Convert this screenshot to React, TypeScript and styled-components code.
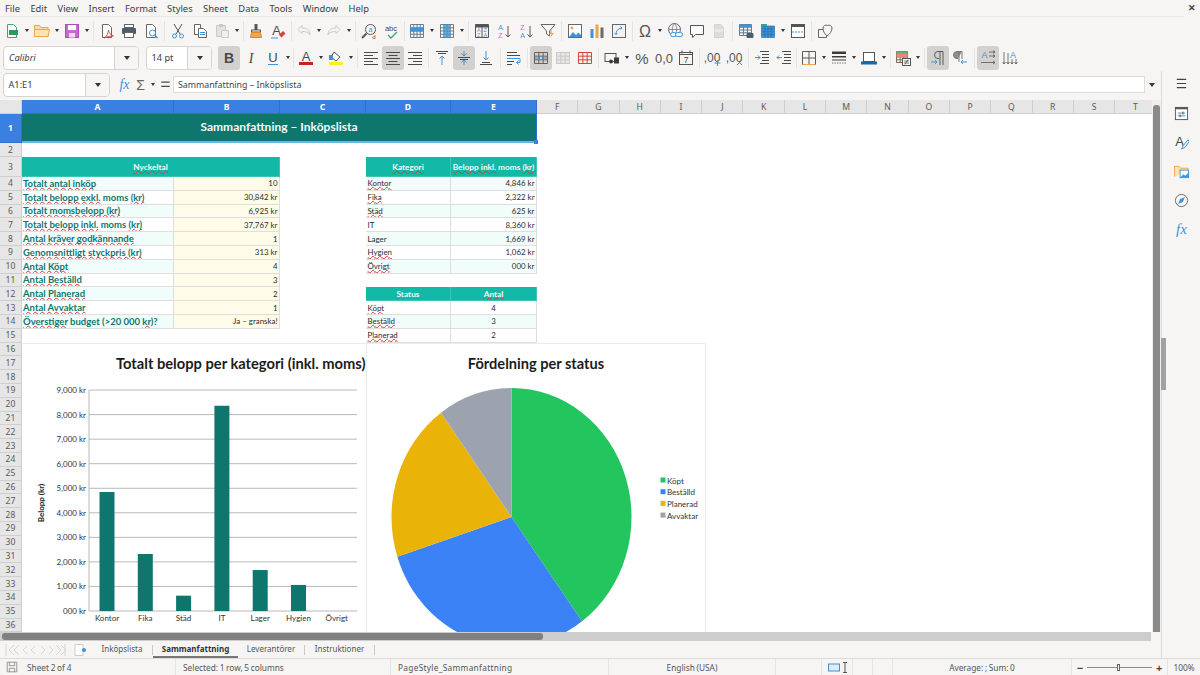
import type { ReactNode } from "react";
import styled, { createGlobalStyle } from "styled-components";

const UI_FONT = `"Noto Sans", "Open Sans", sans-serif`;
const CELL_FONT = `Lato, "Liberation Sans", sans-serif`;

const GlobalStyle = createGlobalStyle`
  html, body {
    margin: 0;
    height: 100%;
    overflow: hidden;
    background: #f6f5f4;
  }
`;

const Page = styled.div`
  width: 1200px;
  height: 675px;
  display: flex;
  flex-direction: column;
  background: #f6f5f4;
  color: #3d3d3d;
  font-family: ${UI_FONT};
  font-size: 9px;
  overflow: hidden;
`;

/* ---------- menu ---------- */

const MenuBar = styled.div`
  height: 16px;
  margin-right: 16px;
  padding-left: 5px;
  display: flex;
  align-items: center;
  gap: 10.4px;
  font-size: 9.4px;
  border-bottom: 1px solid #e9e8e6;
  position: relative;
`;

const CloseMark = styled.span`
  position: absolute;
  right: -12px;
  top: 1px;
  font-size: 9px;
  font-weight: 700;
`;

/* ---------- toolbars ---------- */

const ToolRow = styled.div<{ $first?: boolean }>`
  height: 27px;
  padding-left: ${({ $first }) => ($first ? 1 : 3)}px;
  display: flex;
  align-items: center;
`;

const ToolButton = styled.div<{ $active?: boolean }>`
  width: 22px;
  height: 24px;
  flex: none;
  display: flex;
  align-items: center;
  justify-content: center;
  border-radius: 3px;
  background: ${({ $active }) => ($active ? "#d3d1ce" : "transparent")};

  svg {
    width: 16px;
    height: 16px;
    display: block;
    overflow: visible;
  }
`;

const DropArrow = styled.div`
  width: 8px;
  flex: none;
  display: flex;
  justify-content: center;

  &::after {
    content: "";
    border-left: 2.5px solid transparent;
    border-right: 2.5px solid transparent;
    border-top: 3px solid #333;
  }
`;

const Divider = styled.div<{ $w?: number }>`
  width: ${({ $w }) => $w ?? 5}px;
  flex: none;
  height: 20px;
  display: flex;
  justify-content: center;

  &::after {
    content: "";
    width: 1px;
    background: #e4e3e0;
  }
`;

const Combo = styled.div<{ $w: number; $gap: number }>`
  width: ${({ $w }) => $w}px;
  height: 24px;
  margin-right: ${({ $gap }) => $gap}px;
  flex: none;
  box-sizing: border-box;
  display: flex;
  background: #fff;
  border: 1px solid #d6d4d1;
  border-radius: 4px;
  overflow: hidden;
`;

const ComboText = styled.div<{ $italic?: boolean }>`
  flex: 1;
  padding-left: ${({ $italic }) => ($italic ? 5 : 4.5)}px;
  display: flex;
  align-items: center;
  font-size: 9.2px;
  font-style: ${({ $italic }) => ($italic ? "italic" : "normal")};
`;

const ComboButton = styled.div`
  width: 23px;
  flex: none;
  display: flex;
  align-items: center;
  justify-content: center;
  background: #f6f5f4;
  border-left: 1px solid #d6d4d1;

  &::after {
    content: "";
    border-left: 3.5px solid transparent;
    border-right: 3.5px solid transparent;
    border-top: 4px solid #333;
  }
`;

/* ---------- workspace ---------- */

const Workspace = styled.div`
  flex: 1;
  min-height: 0;
  display: flex;
`;

const MainColumn = styled.div`
  width: 1161px;
  display: flex;
  flex-direction: column;
`;

const Sidebar = styled.div`
  position: relative;
  flex: 1;
  display: flex;
  flex-direction: column;
  align-items: center;
  border-left: 1px solid #dcdbd8;

  svg {
    width: 15px;
    height: 15px;
    margin: 7px 0;
    display: block;
  }

  svg:first-of-type {
    margin: 5px 0 8px;
  }
`;

const SideHandle = styled.div`
  position: absolute;
  left: -1px;
  top: 267px;
  width: 5px;
  height: 52px;
  background: #a2a2a2;
`;

const FormulaBar = styled.div`
  height: 29px;
  padding: 1px 0 3px 3px;
  box-sizing: border-box;
  display: flex;
  align-items: center;
`;

const FormulaIcons = styled.div`
  width: 63px;
  flex: none;
  display: flex;
  align-items: center;
  padding-left: 6.5px;
  gap: 1px;
  box-sizing: border-box;

  svg {
    width: 15px;
    height: 15px;
    flex: none;
    display: block;
  }
`;

const FormulaInput = styled.div`
  width: 972px;
  height: 17px;
  flex: none;
  box-sizing: border-box;
  padding-left: 4px;
  display: flex;
  align-items: center;
  background: #fff;
  border: 1px solid #dddcd9;
  font-size: 8.8px;
  color: #444;
`;

const FormulaArrow = styled(DropArrow)`
  width: 14px;

  &::after {
    border-left-width: 3.5px;
    border-right-width: 3.5px;
    border-top-width: 4px;
  }
`;

const SheetRow = styled.div`
  flex: 1;
  min-height: 0;
  display: flex;
`;

const Sheet = styled.div`
  position: relative;
  flex: 1;
  min-width: 0;
  overflow: hidden;
  display: grid;
  align-content: start;
  grid-template-columns: 22px 152px 106px 86px 85px 86px repeat(15, 41.3px);
  grid-template-rows: 14px 29px 14px 20px repeat(32, 13.8px);
  background: #fff;
  font-family: ${CELL_FONT};
`;

const HeaderCell = styled.div<{ $selected?: boolean; $col?: number }>`
  grid-column: ${({ $col }) => $col ?? "auto"};
  box-sizing: border-box;
  display: flex;
  align-items: center;
  justify-content: center;
  font-family: ${UI_FONT};
  font-size: 8.6px;
  font-weight: ${({ $selected }) => ($selected ? 700 : 400)};
  color: ${({ $selected }) => ($selected ? "#fff" : "#5a5a5a")};
  background: ${({ $selected }) => ($selected ? "#3a7fe2" : "#e6e6e6")};
  border-right: 1px solid ${({ $selected }) => ($selected ? "#2f6fcc" : "#cfcfcf")};
  border-bottom: 1px solid ${({ $selected }) => ($selected ? "#2f6fcc" : "#cfcfcf")};
`;

const RowHeader = styled(HeaderCell)`
  grid-column: 1;
`;

const Cell = styled.div<{
  $col: number;
  $span?: number;
  $bg?: string;
  $align?: string;
}>`
  grid-column: ${({ $col, $span }) => `${$col} / span ${$span ?? 1}`};
  box-sizing: border-box;
  min-width: 0;
  padding: 0 1.5px;
  display: flex;
  align-items: center;
  justify-content: ${({ $align }) => $align ?? "flex-start"};
  white-space: pre;
  overflow: hidden;
  font-size: 7.9px;
  color: #2b2b2b;
  background: ${({ $bg }) => $bg ?? "#fff"};
  border-right: 1px solid #dedede;
  border-bottom: 1px solid #dedede;
`;

const TitleCell = styled(Cell)`
  position: relative;
  overflow: visible;
  padding-bottom: 3px;
  justify-content: center;
  font-size: 12px;
  font-weight: 700;
  color: #f2fbf9;
  background: #0f766e;
  border: none;
  border-right: 1px solid #2f6fcc;
  border-bottom: 2px solid #72aeea;
`;

const FillHandle = styled.span`
  position: absolute;
  right: -2px;
  bottom: -3px;
  width: 4px;
  height: 4px;
  background: #3a7fe2;
`;

const TableHead = styled(Cell)`
  justify-content: center;
  font-size: 8.3px;
  font-weight: 700;
  color: #f0fbf9;
  background: #14b8a6;
  border-color: #3cc4b5;
`;

const KeyLabel = styled(Cell)`
  padding-left: 1px;
  font-size: 9.5px;
  font-weight: 700;
  color: #0f766e;
`;

const Squiggle = styled.span`
  text-decoration: underline wavy #e0353b 1px;
  text-decoration-skip-ink: none;
  text-underline-offset: 0;
`;

const ChartLayer = styled.div`
  position: absolute;
  left: 22px;
  top: 243px;
  display: flex;
`;

const ChartFrame = styled.div<{ $last?: boolean }>`
  width: ${({ $last }) => ($last ? 340 : 344)}px;
  height: 300px;
  box-sizing: border-box;
  background: #fff;
  border: 1px solid #ececec;
  border-left-color: ${({ $last }) => ($last ? "#ececec" : "transparent")};
  border-right-width: ${({ $last }) => ($last ? 1 : 0)}px;

  svg {
    display: block;
    font-family: ${CELL_FONT};
  }
`;

const VScroll = styled.div`
  width: 9px;
  flex: none;
  padding: 5px 1px 0;
  box-sizing: border-box;
  background: #efefee;
  display: flex;

  &::after {
    content: "";
    flex: 1;
    background: #8a8a8a;
    border-radius: 3px 3px 0 0;
  }
`;

const HScroll = styled.div`
  height: 9px;
  flex: none;
  margin-right: 10px;
  padding: 1px 0 1px 2px;
  box-sizing: border-box;
  background: #cdcdcd;
  display: flex;

  &::after {
    content: "";
    width: 541px;
    background: #808080;
    border-radius: 3px;
  }
`;

const TabBar = styled.div`
  height: 17px;
  flex: none;
  display: flex;
  align-items: center;
  font-size: 8px;
  color: #555;
`;

const TabNav = styled.div`
  width: 92px;
  flex: none;
  padding-left: 5px;
  box-sizing: border-box;
  display: flex;
  align-items: center;
`;

const Tab = styled.div<{ $active?: boolean; $w: number }>`
  width: ${({ $w }) => $w}px;
  height: 17px;
  flex: none;
  box-sizing: border-box;
  display: flex;
  align-items: center;
  justify-content: center;
  font-weight: ${({ $active }) => ($active ? 700 : 400)};
  color: ${({ $active }) => ($active ? "#333" : "#555")};
  border-bottom: 2px solid ${({ $active }) => ($active ? "#777" : "transparent")};
`;

const TabSeparator = styled.div`
  width: 1px;
  height: 10px;
  flex: none;
  background: #c9c9c9;
`;

/* ---------- status bar ---------- */

const StatusBar = styled.div`
  height: 17px;
  flex: none;
  display: flex;
  font-size: 8.3px;
  word-spacing: -0.5px;
  color: #555;
  border-top: 1px solid #dcdbd8;
  box-sizing: border-box;
`;

const StatusPart = styled.div<{ $w: number; $center?: boolean; $pad?: number }>`
  width: ${({ $w }) => $w}px;
  flex: none;
  box-sizing: border-box;
  padding-left: ${({ $pad }) => $pad ?? 0}px;
  display: flex;
  align-items: center;
  justify-content: ${({ $center }) => ($center ? "center" : "flex-start")};
  gap: 4px;

  & + & {
    border-left: 1px solid #e6e5e2;
  }
`;

const PageStyleName = styled.span`
  letter-spacing: 0.3px;
`;

const SheetCount = styled.span`
  margin-left: 3px;
`;

const ZoomTrack = styled.div`
  position: relative;
  width: 65px;
  height: 1px;
  background: #8a8a8a;
`;

const ZoomKnob = styled.span`
  position: absolute;
  left: 30px;
  top: -3px;
  width: 3px;
  height: 7px;
  box-sizing: border-box;
  background: #f6f5f4;
  border: 1px solid #666;
`;

const ZoomSign = styled.span`
  font-size: 11px;
  font-weight: 700;
  line-height: 1;
  color: #444;
`;

/* ---------- icons ---------- */

const INK = "#4a4a4a";
const BLUE = "#3d94d8";
const DIM = "#c9c9c9";
const RED = "#d9413b";
const ORANGE = "#eea64a";

// path for a small table outline
const grid = (x: number, y: number, w: number, h: number, cols: number, rows: number) => {
  let d = `M${x} ${y}h${w}v${h}h${-w}z`;
  for (let i = 1; i < cols; i++) d += `M${x + (w * i) / cols} ${y}v${h}`;
  for (let i = 1; i < rows; i++) d += `M${x} ${y + (h * i) / rows}h${w}`;
  return d;
};

const Svg = ({ children }: { children: ReactNode }) => (
  <svg viewBox="0 0 16 16" fill="none" stroke={INK} strokeWidth="1">
    {children}
  </svg>
);

const Label = ({ x, y, size, fill, children, weight, italic, family }: {
  x: number;
  y: number;
  size: number;
  fill?: string;
  children: string;
  weight?: number;
  italic?: boolean;
  family?: string;
}) => (
  <text
    x={x}
    y={y}
    fontSize={size}
    fill={fill ?? INK}
    stroke="none"
    fontWeight={weight ?? 400}
    fontStyle={italic ? "italic" : "normal"}
    fontFamily={family ?? "'Liberation Sans', sans-serif"}
    textAnchor="middle"
  >
    {children}
  </text>
);

const doc = "M3.5 1.5h6l3 3v10h-9z";
const lines = (rows: [number, number, number][], color = INK) => (
  <path stroke={color} d={rows.map(([x, y, w]) => `M${x} ${y + 0.5}h${w}`).join("")} />
);

const icons: Record<string, ReactNode> = {
  new: (
    <>
      <path d={doc} fill="#fff" stroke="#45a56c" />
      <rect x="5" y="7" width="9" height="5" fill="#2f9a5d" stroke="none" />
    </>
  ),
  open: (
    <>
      <path d="M.5 13.5v-11h5l1.5 2h7v9z" fill="#fdd9a0" stroke={ORANGE} />
      <path d="M.5 6.5h15l-1.5 7H.5z" fill="#fde2b6" stroke={ORANGE} />
    </>
  ),
  save: (
    <>
      <rect x="1.5" y="1.5" width="13" height="13" fill="#c56cd0" stroke="#a84fb5" />
      <rect x="4" y="2" width="8" height="5" fill="#fff" stroke="none" />
      <rect x="5" y="10" width="6" height="4.5" fill="#f2dcf4" stroke="none" />
    </>
  ),
  pdf: (
    <>
      <path d={doc} fill="#fff" stroke="#666" />
      <path d="M5 15c3-1 4-5 4.5-8 .5 3 2 5 5 6-3 0-6 .5-9.5 2z" stroke={RED} strokeWidth=".9" />
    </>
  ),
  print: (
    <>
      <rect x="3.5" y="1.5" width="9" height="3" fill="#fff" stroke="#666" />
      <rect x="1" y="5" width="14" height="6" rx="1" fill="#4f5d6b" stroke="none" />
      <rect x="3.5" y="9.5" width="9" height="5" fill="#fff" stroke="#666" />
    </>
  ),
  preview: (
    <>
      <path d={doc} fill="#fff" stroke="#666" />
      <circle cx="9.5" cy="10" r="3" stroke={BLUE} />
      <path d="M12 12.5l2.5 2.5" stroke={BLUE} strokeWidth="1.5" />
    </>
  ),
  cut: (
    <>
      <path d="M4 1l6 10M12 1L6 11" stroke="#555" />
      <circle cx="4.5" cy="13" r="2" stroke={BLUE} />
      <circle cx="11.5" cy="13" r="2" stroke={BLUE} />
    </>
  ),
  copy: (
    <>
      <path d="M2.5 1.5h6v10h-6z" fill="#fff" stroke="#666" />
      <path d="M6.5 5.5h5l3 3v6h-8z" fill="#fff" stroke="#666" />
      {lines([[8, 9, 5], [8, 11, 5]], BLUE)}
    </>
  ),
  paste: (
    <>
      <path d="M2.5 2.5h9v11h-9z" fill="#e3e3e3" stroke={DIM} />
      <rect x="5" y="1" width="4" height="3" fill={DIM} stroke="none" />
      <path d="M7.5 7.5h7v7h-7z" fill="#efefef" stroke={DIM} />
    </>
  ),
  clone: (
    <>
      <rect x="6.5" y="1" width="3" height="6" fill="#555" stroke="none" />
      <rect x="3.5" y="7" width="9" height="2" fill="#fff" stroke="#555" />
      <path d="M3.5 9.5h9l1 5h-11z" fill="#f3a644" stroke="#d98a2c" />
    </>
  ),
  clear: (
    <>
      <Label x={6.5} y={12} size={13}>A</Label>
      <path d="M9 12l4-4 2.5 2.5-4 4z" fill={RED} stroke="none" />
      <path d="M1 15h7" stroke={BLUE} />
    </>
  ),
  undo: <path d="M2 6.5L6 2.5V5c5 0 8 2 8 7-1.5-3-4-3.5-8-3.5v2z" stroke={DIM} />,
  redo: <path d="M14 6.5L10 2.5V5c-5 0-8 2-8 7 1.5-3 4-3.5 8-3.5v2z" stroke={DIM} />,
  find: (
    <>
      <circle cx="9.5" cy="6.5" r="5" stroke="#555" />
      <path d="M5.5 10.5L1 15" stroke="#555" strokeWidth="2" />
      <Label x={9.5} y={9} size={7} fill={BLUE}>a</Label>
      <Label x={13} y={15.5} size={6}>d</Label>
    </>
  ),
  spell: (
    <>
      <Label x={8} y={7.5} size={7.5}>abc</Label>
      <path d="M5 12l3 3 6-6" stroke="#3aa76d" strokeWidth="1.3" />
    </>
  ),
  rowTable: (
    <>
      <path d={grid(1.5, 1.5, 13, 13, 4, 4)} stroke="#6d7d8c" />
      <rect x="1.5" y="5" width="13" height="3.5" fill={BLUE} stroke="none" />
    </>
  ),
  colTable: (
    <>
      <path d={grid(1.5, 1.5, 13, 13, 4, 4)} stroke="#6d7d8c" />
      <rect x="5" y="1.5" width="6" height="13" fill={BLUE} stroke="none" opacity=".75" />
    </>
  ),
  sort: (
    <>
      <path d="M1.5 1.5h13v13h-13zM8 1.5v13M1.5 4h13" stroke="#555" />
      <rect x="1.5" y="1.5" width="13" height="2.5" fill="#555" stroke="none" />
      <Label x={4.8} y={9} size={5.5} fill="#c66dc9">A</Label>
      <Label x={4.8} y={14} size={5.5} fill="#c66dc9">Z</Label>
      <Label x={11.3} y={9} size={5.5} fill={BLUE}>Z</Label>
      <Label x={11.3} y={14} size={5.5} fill={BLUE}>A</Label>
    </>
  ),
  sortAsc: (
    <>
      <Label x={4.5} y={7} size={7} fill={BLUE}>A</Label>
      <Label x={4.5} y={15} size={7} fill="#c66dc9">Z</Label>
      <path d="M12 3v11M9.5 11.5L12 14l2.5-2.5" stroke="#555" />
    </>
  ),
  sortDesc: (
    <>
      <Label x={4.5} y={7} size={7} fill="#c66dc9">Z</Label>
      <Label x={4.5} y={15} size={7} fill={BLUE}>A</Label>
      <path d="M12 3v11M9.5 11.5L12 14l2.5-2.5" stroke="#555" />
    </>
  ),
  filter: (
    <>
      <path d="M1 1.5h14L9.5 8v5l-3-2V8z" stroke="#666" />
      <path d="M12 6l-3 5h2.5L10 15l4-5h-2.5z" fill={ORANGE} stroke="none" />
    </>
  ),
  image: (
    <>
      <rect x="1.5" y="1.5" width="13" height="13" stroke="#666" fill="#fff" />
      <circle cx="5" cy="5" r="1.5" fill={ORANGE} stroke="none" />
      <path d="M2 14l4-5 3 3 2.5-2.5L14 12v2z" fill={BLUE} stroke="none" />
    </>
  ),
  chart: (
    <>
      <rect x="1.5" y="6" width="3" height="9" fill={BLUE} stroke="none" />
      <rect x="6.5" y="1.5" width="3" height="13.5" fill={ORANGE} stroke="none" />
      <rect x="11.5" y="4.5" width="3" height="10.5" fill="#6b6b6b" stroke="none" />
    </>
  ),
  pivot: (
    <>
      <rect x="1.5" y="1.5" width="13" height="13" fill="#f2f2f2" stroke="#666" />
      <path d="M5 11.5a6 6 0 0 1 6-6.5M9.5 3.5L11 5 9.5 6.5M3.5 10L5 11.5 6.5 10" stroke={BLUE} />
    </>
  ),
  omega: <Label x={8} y={13.5} size={16} fill="#555">Ω</Label>,
  link: (
    <>
      <circle cx="7.5" cy="6.5" r="6" stroke="#667" />
      <path d="M1.5 6.5h12M7.5.5c-3 3-3 9 0 12M7.5.5c3 3 3 9 0 12" stroke="#667" strokeWidth=".7" />
      <rect x="3.5" y="9.5" width="6" height="4" rx="2" fill="#f6f5f4" stroke={BLUE} />
      <rect x="8.5" y="9.5" width="7" height="4" rx="2" fill="#f6f5f4" stroke={BLUE} />
    </>
  ),
  comment: <path d="M1.5 2.5h13v9h-8l-3 3v-3h-2z" stroke="#555" fill="#fff" />,
  headers: (
    <>
      <path d={doc} fill="#dcdcdc" stroke="#d2d2d2" />
      <rect x="3.5" y="6" width="9" height="3" fill="#e8e8e8" stroke="none" />
    </>
  ),
  printArea: (
    <>
      <path d={grid(1.5, 1.5, 12, 11, 3, 4)} stroke="#6d7d8c" />
      <rect x="1.5" y="1.5" width="12" height="2.5" fill={BLUE} stroke="none" />
      <rect x="8.5" y="10" width="7" height="5" rx="1" fill="#4f5d6b" stroke="none" />
    </>
  ),
  freeze: (
    <>
      <rect x="1.5" y="3" width="13" height="11.5" fill={BLUE} stroke="none" />
      <path d={grid(1.5, 3, 13, 11.5, 4, 4)} stroke="#1f6aa5" strokeWidth=".6" />
      <rect x="1" y="1" width="6" height="2" fill="#3aa76d" stroke="none" />
    </>
  ),
  split: (
    <>
      <rect x="1.5" y="1.5" width="13" height="13" stroke="#555" fill="#fff" />
      <rect x="1.5" y="1.5" width="13" height="2.5" fill="#555" stroke="none" />
      <path d="M2 9h12" stroke={BLUE} strokeDasharray="2 1" />
    </>
  ),
  shapes: (
    <>
      <path d="M1.5 6.5h8v8h-8z" stroke="#666" />
      <path d="M10 13C7 10 6 8 6 5a3 3 0 0 1 4.5-2.5A3 3 0 0 1 15 5c0 3-2 6-5 8z" fill="#f6f5f4" stroke="#666" />
    </>
  ),
  bold: <Label x={8} y={13} size={14} weight={700}>B</Label>,
  italic: <Label x={8} y={13} size={14} italic family="'Liberation Serif', serif">I</Label>,
  underline: (
    <>
      <Label x={8} y={12} size={13}>U</Label>
      <path d="M3 14.5h10" stroke={BLUE} />
    </>
  ),
  fontColor: (
    <>
      <Label x={8} y={11} size={13}>A</Label>
      <rect x="1" y="12" width="14" height="3" fill="#c9211e" stroke="none" />
    </>
  ),
  bgColor: (
    <>
      <path d="M6 2l6 5-4 4-5-4z" fill="#fff" stroke="#555" />
      <path d="M1 5h4v5H1z" fill={BLUE} stroke="none" />
      <rect x="1" y="12" width="14" height="3" fill="#ffef1f" stroke="none" />
    </>
  ),
  alignLeft: lines([[1, 2, 14], [1, 5, 9], [1, 8, 14], [1, 11, 9], [1, 14, 14]]),
  alignCenter: lines([[1, 2, 14], [3.5, 5, 9], [1, 8, 14], [3.5, 11, 9], [1, 14, 14]]),
  alignRight: lines([[1, 2, 14], [6, 5, 9], [1, 8, 14], [6, 11, 9], [1, 14, 14]]),
  valignTop: (
    <>
      {lines([[2, 1, 12], [4, 3, 8]])}
      <path d="M8 15V6M5.5 8.5L8 6l2.5 2.5" stroke={BLUE} />
    </>
  ),
  valignMid: (
    <>
      {lines([[2, 7, 12], [4, 9, 8]])}
      <path d="M8 1v5M5.5 3.5L8 6l2.5-2.5M8 15v-5M5.5 12.5L8 10l2.5 2.5" stroke={BLUE} />
    </>
  ),
  valignBottom: (
    <>
      {lines([[2, 14, 12], [4, 12, 8]])}
      <path d="M8 1v9M5.5 7.5L8 10l2.5-2.5" stroke={BLUE} />
    </>
  ),
  wrap: (
    <>
      {lines([[1, 2, 10], [1, 5, 13], [1, 11, 7], [1, 14, 5]])}
      <path d="M1 8.5h13v4h-3M12.5 10.5l-2 2 2 2" stroke={BLUE} />
    </>
  ),
  merge: (
    <>
      <path d={grid(1.5, 2.5, 13, 11, 3, 3)} stroke="#6d5f5f" />
      <path d="M2 8h5M5 6l2 2-2 2M14 8H9M11 6L9 8l2 2" stroke={BLUE} />
    </>
  ),
  mergeOff: (
    <>
      <rect x="1.5" y="2.5" width="13" height="11" fill="#e6e6e6" stroke={DIM} />
      <path d={grid(1.5, 2.5, 13, 11, 3, 3)} stroke={DIM} />
    </>
  ),
  unmerge: <path d={grid(1.5, 2.5, 13, 11, 3, 3)} stroke={RED} />,
  currency: (
    <>
      <rect x="1" y="3.5" width="11" height="8" stroke="#555" />
      <circle cx="7" cy="11.5" r="2" fill="#3c3c3c" stroke="none" />
      <rect x="10" y="7.5" width="5" height="6" fill="#3c3c3c" stroke="none" />
    </>
  ),
  percent: <Label x={8} y={13.5} size={15} fill="#555">%</Label>,
  number: <Label x={8} y={13} size={13} fill="#555">0,0</Label>,
  date: (
    <>
      <rect x="1.5" y="2.5" width="13" height="12" stroke="#555" />
      <path d="M1.5 2.5h13v2h-13zM4 .5v3M12 .5v3" stroke="#555" />
      <Label x={8} y={13} size={8.5}>7</Label>
    </>
  ),
  addDecimal: (
    <>
      <Label x={7} y={11.5} size={12} fill="#555">,00</Label>
      <path d="M12.5 10v6M9.5 13h6" stroke={BLUE} />
    </>
  ),
  delDecimal: (
    <>
      <Label x={7} y={11.5} size={12} fill="#555">,00</Label>
      <path d="M10 10l5 5M15 10l-5 5" stroke={RED} />
    </>
  ),
  indent: (
    <>
      {lines([[6, 1, 9], [8, 4, 7], [8, 7, 7], [8, 10, 7], [6, 13, 9]])}
      <path d="M1 7.5h5M4 5.5l2 2-2 2" stroke={BLUE} />
    </>
  ),
  outdent: (
    <>
      {lines([[6, 1, 9], [8, 4, 7], [8, 7, 7], [8, 10, 7], [6, 13, 9]])}
      <path d="M6 7.5H1M3 5.5l-2 2 2 2" stroke={BLUE} />
    </>
  ),
  borders: (
    <>
      <path d="M1.5 1.5h13v13h-13zM8 1.5v13M1.5 8h13" stroke="#5a5a5a" />
      <path d="M1.5 14.5h13" stroke={ORANGE} />
    </>
  ),
  lineStyle: (
    <>
      <rect x="1" y="1.5" width="14" height="2.5" fill="#3c3c3c" stroke="none" />
      <rect x="1" y="6" width="14" height="1.5" fill="#3c3c3c" stroke="none" />
      <path d="M1 10h14" stroke="#3c3c3c" />
      <path d="M1 13h14" stroke="#777" strokeDasharray="1.5 1" />
    </>
  ),
  borderColor: (
    <>
      <rect x="2.5" y="2.5" width="11" height="9" stroke="#555" fill="#fff" />
      <rect x="0" y="11.5" width="16" height="3" fill="#1b69aa" stroke="none" />
    </>
  ),
  conditional: (
    <>
      <path d={grid(1.5, 1.5, 11, 11, 3, 4)} stroke="#7a6a5a" />
      <rect x="1.5" y="4" width="11" height="3" fill="#e58b7d" stroke="none" />
      <rect x="1.5" y="1.5" width="11" height="2.5" fill="#69b37d" stroke="none" />
      <rect x="7.5" y="8.5" width="8" height="7" fill="#fff" stroke="#555" />
      <path d="M9 11h5M9 13h5M10 14.5l3-5" stroke="#444" strokeWidth=".7" />
    </>
  ),
  paraLtr: (
    <>
      <path d="M13 1.5H8a3.5 3.5 0 0 0 0 7h1M10 1.5V15M13 1.5V15" stroke="#5a5a5a" />
      <path d="M1 12h6M5 10l2 2-2 2" stroke={BLUE} />
    </>
  ),
  paraRtl: (
    <>
      <path d="M10 1.5H5a3.5 3.5 0 0 0 0 7h1M7 1.5V12M10 1.5V9" stroke="#777" fill="#8e8e8e" />
      <path d="M15 12H9M11 10l-2 2 2 2" stroke={BLUE} />
    </>
  ),
  textLtr: (
    <>
      <Label x={4.5} y={8} size={9} fill={BLUE}>A</Label>
      <path d="M9 2h6M13 .5L15 2l-2 1.5M9 6h6M13 4.5L15 6l-2 1.5M1 12.5h14M13 11l2 1.5-2 1.5" stroke="#555" strokeWidth=".8" />
    </>
  ),
  textTtb: (
    <>
      <Label x={11} y={8} size={9} fill={BLUE}>A</Label>
      <path d="M2 2v12M.5 12L2 14l1.5-2M6 3v11M4.5 12L6 14l1.5-2M10 9v5M8.5 12l1.5 2 1.5-2M14 9v5M12.5 12l1.5 2 1.5-2" stroke="#555" strokeWidth=".8" />
    </>
  ),
  fx: <Label x={8} y={13} size={15} italic fill={BLUE} family="'Liberation Serif', serif">fx</Label>,
  sigma: <Label x={8} y={13.5} size={15} fill="#666">Σ</Label>,
  equals: <path d="M3.5 5.5h9M3.5 10h9" stroke="#4a4a4a" strokeWidth="1.4" />,
  menu: <path d="M3 3.5h10M3 8h10M3 12.5h10" stroke="#444" strokeWidth="1.3" />,
  properties: (
    <>
      <rect x="1.5" y="1.5" width="13" height="13" stroke="#555" fill="#fff" />
      <rect x="1.5" y="1.5" width="13" height="2" fill="#555" stroke="none" />
      <path d="M4 7.5h8M4 10.5h8" stroke={BLUE} />
      <path d="M9.5 6v3M6.5 9v3" stroke="#444" />
    </>
  ),
  styles: (
    <>
      <Label x={6} y={11.5} size={14}>A</Label>
      <path d="M15 5l-5 6-2 4 4-2 4-6z" fill="#e8f2fb" stroke={BLUE} />
    </>
  ),
  gallery: (
    <>
      <path d="M.5 13.5v-11h5l1.5 2h8v2" fill="#fde0b0" stroke={ORANGE} />
      <rect x="6.5" y="6.5" width="9" height="8" fill="#fff" stroke={BLUE} />
      <path d="M7 14l3-3 2 1.5 3-3V14z" fill={BLUE} stroke="none" />
    </>
  ),
  navigator: (
    <>
      <circle cx="8" cy="8" r="6.5" stroke="#666" />
      <path d="M11.5 4.5L9.5 9.5 4.5 11.5l2-5z" fill={BLUE} stroke="none" />
    </>
  ),
  fxSide: <Label x={8} y={13} size={16} italic fill={BLUE} family="'Liberation Serif', serif">fx</Label>,
  saveStatus: <path d="M2.5 2.5h11v11h-11zM5 2.5v4h6v-4M5 13.5v-4h6v4" stroke="#8a8a8a" />,
};

const Icon = ({ name }: { name: string }) => <Svg>{icons[name]}</Svg>;

// "|" is a divider, "|n" a divider n wide, "v" a dropdown arrow, "name!" a pressed button
const Tools = ({ items }: { items: string[] }) => (
  <>
    {items.map((item, i) => {
      if (item === "v") return <DropArrow key={i} />;
      if (item[0] === "|") return <Divider key={i} $w={Number(item.slice(1)) || 5} />;
      const active = item.endsWith("!");
      return (
        <ToolButton key={i} $active={active}>
          <Icon name={active ? item.slice(0, -1) : item} />
        </ToolButton>
      );
    })}
  </>
);

const firstRow = [
  "new", "v", "open", "v", "save", "v", "|", "pdf", "print", "preview", "|",
  "cut", "copy", "paste", "v", "|4", "clone", "clear", "|4", "undo", "v", "redo", "v", "|",
  "find", "spell", "|4", "rowTable", "v", "colTable", "v", "|", "sort", "sortAsc", "sortDesc", "filter", "|",
  "image", "chart", "pivot", "|4", "omega", "v", "link", "comment", "headers", "|",
  "printArea", "freeze", "v", "split", "|", "shapes",
];

const secondRow = [
  "bold!", "italic", "underline", "v", "|3", "fontColor", "v", "bgColor", "v", "|",
  "alignLeft", "alignCenter!", "alignRight", "|", "valignTop", "valignMid!", "valignBottom", "|6", "wrap", "|",
  "merge!", "mergeOff", "unmerge", "|", "currency", "v", "percent", "number", "date", "|",
  "addDecimal", "delDecimal", "|", "indent", "outdent", "|3", "borders", "v", "lineStyle", "v", "borderColor", "v", "|4",
  "conditional", "v", "|5", "paraLtr!", "paraRtl", "|6", "textLtr!", "textTtb",
];

/* ---------- sheet data ---------- */

const MINT = "#f0fdfa";
const CREAM = "#fefce8";

const Marked = ({ text }: { text: string }) => (
  <span>
    {text.split("*").map((part, i) => (i % 2 ? <Squiggle key={i}>{part}</Squiggle> : part))}
  </span>
);

const keyFigures: [string, string][] = [
  ["*Totalt antal inköp*", "10"],
  ["*Totalt belopp exkl.* moms *(kr)*", "30,842 kr"],
  ["*Totalt momsbelopp (kr)*", "6,925 kr"],
  ["*Totalt belopp inkl.* moms *(kr)*", "37,767 kr"],
  ["*Antal kräver godkännande*", "1"],
  ["*Genomsnittligt styckpris (kr)*", "313 kr"],
  ["*Antal Köpt*", "4"],
  ["*Antal Beställd*", "3"],
  ["*Antal Planerad*", "2"],
  ["*Antal Avvaktar*", "1"],
  ["*Överstiger* budget (>20 000 *kr*)?", "Ja – granska!"],
];

// right hand tables, by sheet row
const rightCells: Record<number, { head?: boolean; d: string; e: string; center?: boolean; tint?: boolean }> = {
  4: { d: "*Kontor*", e: "4,846 kr", tint: true },
  5: { d: "*Fika*", e: "2,322 kr" },
  6: { d: "*Städ*", e: "625 kr", tint: true },
  7: { d: "IT", e: "8,360 kr" },
  8: { d: "Lager", e: "1,669 kr", tint: true },
  9: { d: "*Hygien*", e: "1,062 kr" },
  10: { d: "*Övrigt*", e: "000 kr", tint: true },
  12: { head: true, d: "Status", e: "*Antal*" },
  13: { d: "*Köpt*", e: "4", center: true },
  14: { d: "*Beställd*", e: "3", center: true, tint: true },
  15: { d: "*Planerad*", e: "2", center: true },
};

const columns = "ABCDEFGHIJKLMNOPQRST".split("");
const rowNumbers = Array.from({ length: 36 }, (_, i) => i + 1);

/* ---------- charts ---------- */

const categories: [string, number][] = [
  ["Kontor", 4846],
  ["Fika", 2322],
  ["Städ", 625],
  ["IT", 8360],
  ["Lager", 1669],
  ["Hygien", 1062],
  ["Övrigt", 0],
];

const BarChart = () => {
  const zeroY = 267;
  const perThousand = 24.55;
  const ticks = Array.from({ length: 10 }, (_, i) => i);
  return (
    <svg width="344" height="298">
      <text x="93" y="25" fontSize="14.7" fontWeight="700" fill="#1c1c1c">
        Totalt belopp per kategori (inkl. moms)
      </text>
      {ticks.map((t) => {
        const y = zeroY - t * perThousand;
        return (
          <g key={t}>
            <line x1="66" x2="334" y1={y} y2={y} stroke="#b8b8b8" />
            <text x="63" y={y + 3} fontSize="8" textAnchor="end" fill="#333">
              {t === 0 ? "000 kr" : `${t},000 kr`}
            </text>
          </g>
        );
      })}
      <line x1="66" x2="66" y1={zeroY - 9 * perThousand} y2={zeroY} stroke="#b8b8b8" />
      {categories.map(([name, value], i) => {
        const h = (value / 1000) * perThousand;
        const x = 76.5 + i * 38.3;
        return (
          <g key={name}>
            <rect x={x} y={zeroY - h} width="15" height={h} fill="#0f766e" />
            <text x={x + 7.5} y={zeroY + 10} fontSize="8" textAnchor="middle" fill="#333">
              {name}
            </text>
          </g>
        );
      })}
      <text
        transform="translate(21 159) rotate(-90)"
        fontSize="8"
        fontWeight="700"
        textAnchor="middle"
        fill="#222"
      >
        Belopp (kr)
      </text>
    </svg>
  );
};

const statusSlices = [
  { name: "Köpt", share: 0.4, color: "#22c55e" },
  { name: "Beställd", share: 0.3, color: "#3b82f6" },
  { name: "Planerad", share: 0.2, color: "#eab308" },
  { name: "Avvaktar", share: 0.1, color: "#9ca3af" },
];

const PieChart = () => {
  const cx = 144.5;
  const cy = 173;
  const rx = 120;
  const ry = 129;
  let start = 0;
  const point = (share: number) => {
    const a = share * Math.PI * 2;
    return `${cx + rx * Math.sin(a)} ${cy - ry * Math.cos(a)}`;
  };
  return (
    <svg width="338" height="298">
      <text x="169" y="25" fontSize="14.6" fontWeight="700" textAnchor="middle" fill="#1c1c1c">
        Fördelning per status
      </text>
      {statusSlices.map((s) => {
        const from = start;
        start += s.share;
        return (
          <path
            key={s.name}
            d={`M${cx} ${cy}L${point(from)}A${rx} ${ry} 0 0 1 ${point(start)}Z`}
            fill={s.color}
          />
        );
      })}
      {statusSlices.map((s, i) => (
        <g key={s.name}>
          <rect x="293.5" y={133.5 + i * 11.7} width="5" height="5" fill={s.color} />
          <text x="300" y={139.5 + i * 11.7} fontSize="8" fill="#333">
            {s.name}
          </text>
        </g>
      ))}
    </svg>
  );
};

/* ---------- page ---------- */

const SheetCells = () => (
  <Sheet>
    <HeaderCell />
    {columns.map((c, i) => (
      <HeaderCell key={c} $selected={i < 5} $col={i + 2}>
        {c}
      </HeaderCell>
    ))}
    {rowNumbers.map((n) => {
      const right = rightCells[n];
      const keyRow = n >= 4 && n <= 14 ? keyFigures[n - 4] : null;
      return [
        <RowHeader key={n} $selected={n === 1}>{n}</RowHeader>,
        n === 1 && (
          <TitleCell key="title" $col={2} $span={5}>
            Sammanfattning – Inköpslista
            <FillHandle />
          </TitleCell>
        ),
        n === 3 && (
          <TableHead key="keyHead" $col={2} $span={2}>
            <Marked text="*Nyckeltal*" />
          </TableHead>
        ),
        keyRow && (
          <KeyLabel key={`a${n}`} $col={2} $bg={n % 2 === 0 ? MINT : "#fff"}>
            <Marked text={keyRow[0]} />
          </KeyLabel>
        ),
        keyRow && (
          <Cell key={`b${n}`} $col={3} $bg={CREAM} $align="flex-end">
            {keyRow[1]}
          </Cell>
        ),
        n === 3 && (
          <TableHead key="catHead" $col={5}>
            <Marked text="*Kategori*" />
          </TableHead>
        ),
        n === 3 && (
          <TableHead key="amountHead" $col={6}>
            <Marked text="*Belopp inkl.* moms *(kr)*" />
          </TableHead>
        ),
        right && !right.head && (
          <Cell key={`d${n}`} $col={5} $bg={right.tint ? MINT : "#fff"}>
            <Marked text={right.d} />
          </Cell>
        ),
        right && !right.head && (
          <Cell
            key={`e${n}`}
            $col={6}
            $bg={right.tint ? MINT : "#fff"}
            $align={right.center ? "center" : "flex-end"}
          >
            {right.e}
          </Cell>
        ),
        right?.head && (
          <TableHead key={`d${n}`} $col={5}>
            {right.d}
          </TableHead>
        ),
        right?.head && (
          <TableHead key={`e${n}`} $col={6}>
            <Marked text={right.e} />
          </TableHead>
        ),
      ];
    })}
    <ChartLayer>
      <ChartFrame>
        <BarChart />
      </ChartFrame>
      <ChartFrame $last>
        <PieChart />
      </ChartFrame>
    </ChartLayer>
  </Sheet>
);

export default function App() {
  return (
    <Page>
      <GlobalStyle />
      <MenuBar>
        {["File", "Edit", "View", "Insert", "Format", "Styles", "Sheet", "Data", "Tools", "Window", "Help"].map(
          (m) => <span key={m}>{m}</span>
        )}
        <CloseMark>✕</CloseMark>
      </MenuBar>
      <ToolRow $first>
        <Tools items={firstRow} />
      </ToolRow>
      <ToolRow>
        <Combo $w={136} $gap={7}>
          <ComboText $italic>Calibri</ComboText>
          <ComboButton />
        </Combo>
        <Combo $w={66} $gap={6}>
          <ComboText>14 pt</ComboText>
          <ComboButton />
        </Combo>
        <Tools items={secondRow} />
      </ToolRow>
      <Workspace>
        <MainColumn>
          <FormulaBar>
            <Combo $w={107} $gap={0}>
              <ComboText>A1:E1</ComboText>
              <ComboButton />
            </Combo>
            <FormulaIcons>
              <Icon name="fx" />
              <Icon name="sigma" />
              <DropArrow />
              <Icon name="equals" />
            </FormulaIcons>
            <FormulaInput>Sammanfattning – Inköpslista</FormulaInput>
            <FormulaArrow />
          </FormulaBar>
          <SheetRow>
            <SheetCells />
            <VScroll />
          </SheetRow>
          <HScroll />
          <TabBar>
            <TabNav>
              <svg width="82" height="14" viewBox="0 0 82 14" fill="none" stroke="#d5d5d5">
                <path d="M1 1v12M9 2L4 7l5 5M14 2L9 7l5 5M22 3l-4 4 4 4M30 3l-4 4 4 4M36 3l4 4-4 4M44 3l4 4-4 4M51 2l5 5-5 5M56 2l5 5-5 5M60 1v12" />
                <path d="M70 1.5h8v11h-8z" fill="#fff" stroke="#ccc" />
                <circle cx="79" cy="7" r="2" fill="#3d94d8" stroke="none" />
              </svg>
            </TabNav>
            <Tab $w={60}>Inköpslista</Tab>
            <TabSeparator />
            <Tab $w={85} $active>Sammanfattning</Tab>
            <Tab $w={66}>Leverantörer</Tab>
            <TabSeparator />
            <Tab $w={69}>Instruktioner</Tab>
            <TabSeparator />
          </TabBar>
        </MainColumn>
        <Sidebar>
          <SideHandle />
          {["menu", "properties", "styles", "gallery", "navigator", "fxSide"].map((name) => (
            <Icon key={name} name={name} />
          ))}
        </Sidebar>
      </Workspace>
      <StatusBar>
        <StatusPart $w={175} $pad={4}>
          <svg width="16" height="14" viewBox="0 0 16 16" fill="none">{icons.saveStatus}</svg>
          <SheetCount>Sheet 2 of 4</SheetCount>
        </StatusPart>
        <StatusPart $w={215} $pad={7}>Selected: 1 row, 5 columns</StatusPart>
        <StatusPart $w={218} $pad={7}>
          <PageStyleName>PageStyle_Sammanfattning</PageStyleName>
        </StatusPart>
        <StatusPart $w={167} $center>English (USA)</StatusPart>
        <StatusPart $w={46} />
        <StatusPart $w={31} $pad={6}>
          <svg width="20" height="13" viewBox="0 0 20 13" fill="none">
            <rect x=".5" y="3" width="11" height="7" fill="#dcebf7" stroke="#3d94d8" />
            <path d="M15 1.5h4M17 1.5v10M15 11.5h4" stroke="#555" />
          </svg>
        </StatusPart>
        <StatusPart $w={20} />
        <StatusPart $w={20} />
        <StatusPart $w={179} $center>Average: ; Sum: 0</StatusPart>
        <StatusPart $w={96} $center>
          <ZoomSign>−</ZoomSign>
          <ZoomTrack>
            <ZoomKnob />
          </ZoomTrack>
          <ZoomSign>+</ZoomSign>
        </StatusPart>
        <StatusPart $w={33} $center>100%</StatusPart>
      </StatusBar>
    </Page>
  );
}
